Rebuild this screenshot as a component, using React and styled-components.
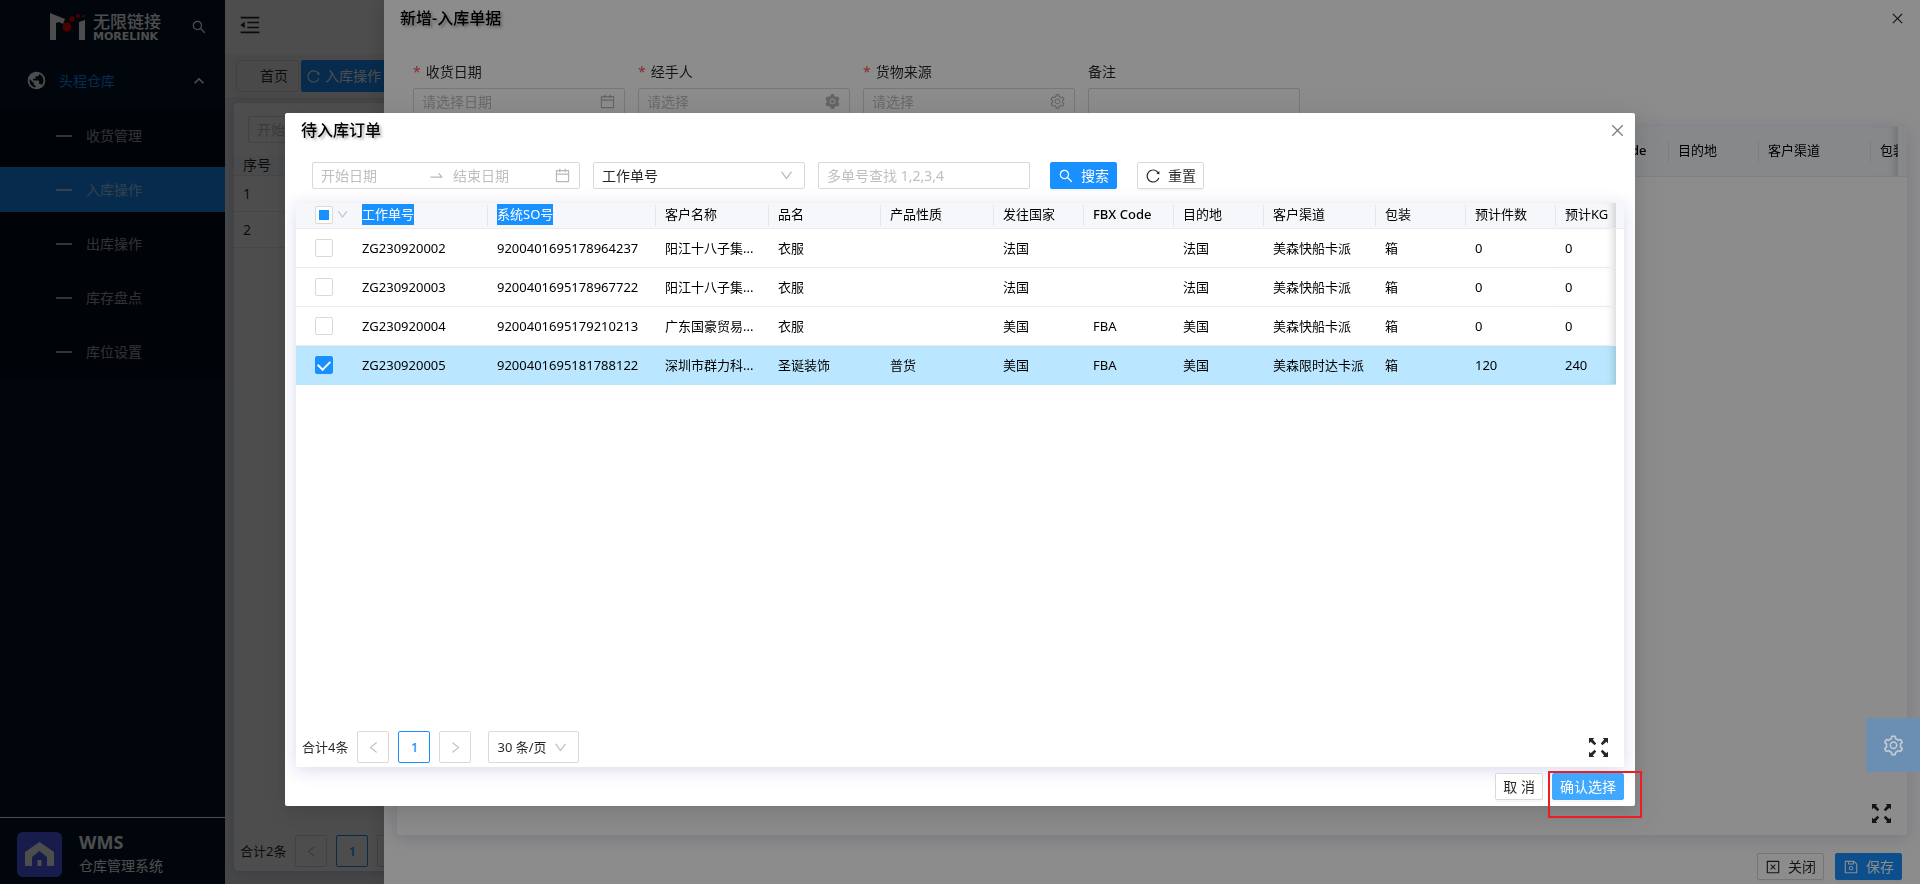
import React, { useState } from 'react'
import styled, { createGlobalStyle, css } from 'styled-components';
import {
    AiFillSetting,
    AiOutlineCalendar,
    AiOutlineClose,
    AiOutlineCloseSquare,
    AiOutlineDown,
    AiOutlineLeft,
    AiOutlineMenuFold,
    AiOutlineReload,
    AiOutlineRight,
    AiOutlineSave,
    AiOutlineSearch,
    AiOutlineSetting,
    AiOutlineSwapRight,
} from 'react-icons/ai';
import { MdKeyboardArrowUp, MdPublic } from 'react-icons/md';

const menuItems = ['收货管理', '入库操作', '出库操作', '库存盘点', '库位设置'];

const columns = [
    { key: 'jobNo', title: '工作单号', width: 135, marked: true },
    { key: 'soNo', title: '系统SO号', width: 168, marked: true },
    { key: 'customer', title: '客户名称', width: 113 },
    { key: 'goods', title: '品名', width: 112 },
    { key: 'nature', title: '产品性质', width: 113 },
    { key: 'country', title: '发往国家', width: 90 },
    { key: 'fbx', title: 'FBX Code', width: 90 },
    { key: 'dest', title: '目的地', width: 90 },
    { key: 'channel', title: '客户渠道', width: 112 },
    { key: 'pack', title: '包装', width: 90 },
    { key: 'count', title: '预计件数', width: 90 },
    { key: 'weight', title: '预计KG' },
];

const orders = [
    { jobNo: 'ZG230920002', soNo: '9200401695178964237', customer: '阳江十八子集...', goods: '衣服', nature: '', country: '法国', fbx: '', dest: '法国', channel: '美森快船卡派', pack: '箱', count: 0, weight: 0 },
    { jobNo: 'ZG230920003', soNo: '9200401695178967722', customer: '阳江十八子集...', goods: '衣服', nature: '', country: '法国', fbx: '', dest: '法国', channel: '美森快船卡派', pack: '箱', count: 0, weight: 0 },
    { jobNo: 'ZG230920004', soNo: '9200401695179210213', customer: '广东国豪贸易...', goods: '衣服', nature: '', country: '美国', fbx: 'FBA', dest: '美国', channel: '美森快船卡派', pack: '箱', count: 0, weight: 0 },
    { jobNo: 'ZG230920005', soNo: '9200401695181788122', customer: '深圳市群力科...', goods: '圣诞装饰', nature: '普货', country: '美国', fbx: 'FBA', dest: '美国', channel: '美森限时达卡派', pack: '箱', count: 120, weight: 240 },
];

function LogoMark() {
    return (
        <svg width="36" height="28" viewBox="0 0 36 28" aria-hidden="true">
            <path d="M0 0 L15 6 L13 11 C10 9 8 9 6 10 V27 H0 Z" fill="#fff" />
            <path d="M29 9 L35 7 V27 H29 Z" fill="#fff" />
            <circle cx="17" cy="14" r="4.5" fill="#f00" />
            <circle cx="22" cy="6" r="2.8" fill="#f00" />
            <circle cx="28" cy="3" r="2" fill="#f00" />
            <circle cx="33.5" cy="3" r="1.3" fill="#f00" />
        </svg>
    );
}

function HouseIcon() {
    return (
        <svg width="29" height="24" viewBox="0 0 29 24" aria-hidden="true">
            <path d="M14.5 0 L29 10 V24 H22 V15 L14.5 9 L7 15 V24 H0 V10 Z" fill="#fff" />
            <rect x="12.5" y="18" width="4" height="6" fill="#fff" />
        </svg>
    );
}

function ExpandIcon() {
    return (
        <svg width="19" height="19" viewBox="0 0 19 19" aria-hidden="true">
            <path d="M0 0 H5.4 L3.8 1.6 L7.2 5.6 L5.6 7.2 L1.6 3.8 L0 5.4 Z" />
            <path d="M19 0 H13.6 L15.2 1.6 L11.8 5.6 L13.4 7.2 L17.4 3.8 L19 5.4 Z" />
            <path d="M0 19 H5.4 L3.8 17.4 L7.2 13.4 L5.6 11.8 L1.6 15.2 L0 13.6 Z" />
            <path d="M19 19 H13.6 L15.2 17.4 L11.8 13.4 L13.4 11.8 L17.4 15.2 L19 13.6 Z" />
        </svg>
    );
}

function DateRange({ name }) {
    return (
        <Field $wide>
            <input aria-label={`${name}开始日期`} placeholder="开始日期" />
            <AiOutlineSwapRight className="arrow" />
            <input aria-label={`${name}结束日期`} placeholder="结束日期" />
            <AiOutlineCalendar />
        </Field>
    );
}

function Pager({ total, size }) {
    return (
        <PagerRow>
            <span className="total">合计{total}条</span>
            <PageButton aria-label="上一页"><AiOutlineLeft /></PageButton>
            <PageButton $active>1</PageButton>
            <PageButton aria-label="下一页"><AiOutlineRight /></PageButton>
            {size && (
                <PageSize>
                    <select aria-label="每页条数" defaultValue={size}>
                        <option value={size}>{size} 条/页</option>
                    </select>
                    <AiOutlineDown />
                </PageSize>
            )}
        </PagerRow>
    );
}

function Sidebar() {
    const [current, setCurrent] = useState(1);

    return (
        <Side>
            <Brand>
                <LogoMark />
                <div className="names">
                    <span className="cn">无限链接</span>
                    <span className="en">MORELINK</span>
                </div>
                <button aria-label="搜索菜单"><AiOutlineSearch size={16} /></button>
            </Brand>
            <MenuTitle>
                <MdPublic size={21} />
                <span>头程仓库</span>
                <MdKeyboardArrowUp size={20} className="fold" />
            </MenuTitle>
            <SubMenu>
                {
                    menuItems.map((item, index) => (
                        <MenuItem
                            key={item}
                            href={`#${index}`}
                            $selected={index === current}
                            onClick={() => setCurrent(index)}>
                            {item}
                        </MenuItem>
                    ))
                }
            </SubMenu>
            <SystemInfo>
                <div className="house"><HouseIcon /></div>
                <div>
                    <h2>WMS</h2>
                    <p>仓库管理系统</p>
                </div>
            </SystemInfo>
        </Side>
    );
}

function InboundPage() {
    return (
        <Main>
            <TopBar>
                <button aria-label="收起菜单"><AiOutlineMenuFold size={24} /></button>
            </TopBar>
            <TabBar>
                <Tab href="#home">首页</Tab>
                <Tab href="#inbound" $active><AiOutlineReload size={15} />入库操作</Tab>
            </TabBar>
            <PageCard>
                <div className="filter"><DateRange name="入库" /></div>
                <PlainTable>
                    <thead>
                        <tr><th>序号</th></tr>
                    </thead>
                    <tbody>
                        <tr><td>1</td></tr>
                        <tr><td>2</td></tr>
                    </tbody>
                </PlainTable>
                <CardFooter>
                    <Pager total={2} />
                </CardFooter>
            </PageCard>
        </Main>
    );
}

function NewReceiptDrawer() {
    return (
        <Mask $align="right">
            <Drawer>
                <PanelHeader $height={36}>
                    <h1>新增-入库单据</h1>
                    <button aria-label="关闭抽屉"><AiOutlineClose size={15} /></button>
                </PanelHeader>
                <ReceiptForm>
                    <FormItem>
                        <Label htmlFor="date" $required>收货日期</Label>
                        <Field>
                            <input id="date" placeholder="请选择日期" />
                            <AiOutlineCalendar />
                        </Field>
                    </FormItem>
                    <FormItem>
                        <Label htmlFor="handler" $required>经手人</Label>
                        <Field>
                            <input id="handler" placeholder="请选择" />
                            <AiFillSetting />
                        </Field>
                    </FormItem>
                    <FormItem>
                        <Label htmlFor="source" $required>货物来源</Label>
                        <Field>
                            <input id="source" placeholder="请选择" />
                            <AiOutlineSetting />
                        </Field>
                    </FormItem>
                    <FormItem>
                        <Label htmlFor="remark">备注</Label>
                        <Field>
                            <input id="remark" />
                        </Field>
                    </FormItem>
                </ReceiptForm>
                <Card $side={13}>
                    <OrderTable $headHeight={50}>
                        <colgroup>
                            <col />
                            <col width="90" />
                            <col width="90" />
                            <col width="112" />
                            <col width="27" />
                            <col width="9" />
                        </colgroup>
                        <thead>
                            <tr>
                                <th></th>
                                <th className="latin">FBX Code</th>
                                <th>目的地</th>
                                <th>客户渠道</th>
                                <th className="edge">包装</th>
                                <th></th>
                            </tr>
                        </thead>
                    </OrderTable>
                    <CardFooter $tall>
                        <ExpandButton aria-label="全屏"><ExpandIcon /></ExpandButton>
                    </CardFooter>
                </Card>
                <DrawerFooter>
                    <Button><AiOutlineCloseSquare />关闭</Button>
                    <Button $primary><AiOutlineSave />保存</Button>
                </DrawerFooter>
            </Drawer>
        </Mask>
    );
}

function PendingOrdersModal() {
    const [checked, setChecked] = useState(['ZG230920005']);

    const toggle = (jobNo) => {
        setChecked(checked.includes(jobNo)
            ? checked.filter((no) => no !== jobNo)
            : [...checked, jobNo]);
    }

    const partly = checked.length > 0 && checked.length < orders.length;

    return (
        <Mask $align="middle">
            <Modal role="dialog" aria-label="待入库订单">
                <PanelHeader $height={34}>
                    <h1>待入库订单</h1>
                    <button aria-label="关闭弹窗"><AiOutlineClose size={17} /></button>
                </PanelHeader>
                <FilterRow>
                    <DateRange name="订单" />
                    <Field>
                        <select aria-label="单号类型" defaultValue="job">
                            <option value="job">工作单号</option>
                        </select>
                        <AiOutlineDown className="down" />
                    </Field>
                    <Field>
                        <input aria-label="多单号查找" placeholder="多单号查找 1,2,3,4" />
                    </Field>
                    <div className="actions">
                        <Button $primary><AiOutlineSearch />搜索</Button>
                        <Button><AiOutlineReload />重置</Button>
                    </div>
                </FilterRow>
                <Card $side={11}>
                    <OrderTable $headHeight={26}>
                        <colgroup>
                            <col width="57" />
                            {columns.map((col) => <col key={col.key} width={col.width} />)}
                            <col width="8" />
                        </colgroup>
                        <thead>
                            <tr>
                                <th className="pick">
                                    <div>
                                        <CheckBox aria-label="全选" $partly={partly} checked={checked.length === orders.length} onChange={() => setChecked(partly ? orders.map((o) => o.jobNo) : [])} />
                                        <AiOutlineDown />
                                    </div>
                                </th>
                                {
                                    columns.map((col, index) => (
                                        <th
                                            key={col.key}
                                            className={`${index === columns.length - 1 ? 'edge' : ''} ${col.key === 'fbx' ? 'latin' : ''}`}>
                                            {col.marked ? <mark>{col.title}</mark> : col.title}
                                        </th>
                                    ))
                                }
                                <th></th>
                            </tr>
                        </thead>
                        <tbody>
                            {
                                orders.map((order) => (
                                    <tr key={order.jobNo} className={checked.includes(order.jobNo) ? 'selected' : ''}>
                                        <td className="pick">
                                            <div>
                                                <CheckBox aria-label={order.jobNo} checked={checked.includes(order.jobNo)} onChange={() => toggle(order.jobNo)} />
                                            </div>
                                        </td>
                                        {
                                            columns.map((col, index) => (
                                                <td key={col.key} className={index === columns.length - 1 ? 'edge' : ''}>{order[col.key]}</td>
                                            ))
                                        }
                                    </tr>
                                ))
                            }
                        </tbody>
                    </OrderTable>
                    <CardFooter>
                        <Pager total={4} size={30} />
                        <ExpandButton aria-label="全屏"><ExpandIcon /></ExpandButton>
                    </CardFooter>
                </Card>
                <ModalFooter>
                    <Button>取 消</Button>
                    <Button $primary $hover>确认选择</Button>
                    <Highlight />
                </ModalFooter>
            </Modal>
        </Mask>
    );
}

function App() {
    return (
        <>
            <GlobalStyle />
            <Layout>
                <Sidebar />
                <InboundPage />
            </Layout>
            <NewReceiptDrawer />
            <PendingOrdersModal />
            <SettingHandle aria-label="主题设置"><AiOutlineSetting size={23} /></SettingHandle>
        </>
    );
}

const GlobalStyle = createGlobalStyle`
  * {
    box-sizing: border-box;
  }
  body {
    margin: 0;
    color: rgba(0, 0, 0, 0.85);
    font-family: "Noto Sans", "Noto Sans CJK SC", sans-serif;
    font-size: 14px;
    line-height: 22px;
  }
  h1, h2, p {
    margin: 0;
  }
  a {
    color: inherit;
    text-decoration: none;
  }
  button, input, select {
    margin: 0;
    padding: 0;
    border: 0;
    background: none;
    color: inherit;
    font: inherit;
  }
  button {
    cursor: pointer;
  }
  svg {
    display: block;
    flex: none;
    fill: currentColor;
  }
`;

const Layout = styled.div`
  display: flex;
  min-height: 100vh;
`;

const Side = styled.aside`
  display: flex;
  flex-direction: column;
  width: 225px;
  background: #001529;
  color: rgba(255, 255, 255, 0.65);
`;

const Brand = styled.div`
  display: flex;
  align-items: center;
  gap: 7px;
  height: 54px;
  padding: 0 18px 0 50px;
  color: #fff;
  .names {
    display: flex;
    flex-direction: column;
    flex: 1;
  }
  .cn {
    font-size: 17px;
    font-weight: 500;
    line-height: 18px;
  }
  .en {
    font-family: "DejaVu Sans", sans-serif;
    font-size: 11px;
    font-weight: 700;
    line-height: 11px;
  }
`;

const MenuTitle = styled.div`
  display: flex;
  align-items: center;
  gap: 12px;
  height: 53px;
  padding: 0 16px 0 26px;
  color: #fff;
  span {
    color: #1890ff;
  }
  .fold {
    margin-left: auto;
  }
`;

const SubMenu = styled.nav`
  display: flex;
  flex-direction: column;
  gap: 9px;
  padding: 6px 0 4px;
  background: #000c17;
`;

const MenuItem = styled.a`
  display: flex;
  align-items: center;
  gap: 14px;
  height: 45px;
  padding-left: 56px;
  background: ${({ $selected }) => ($selected ? '#1890ff' : 'transparent')};
  &::before {
    content: "";
    width: 16px;
    height: 2px;
    background: currentColor;
  }
`;

const SystemInfo = styled.div`
  display: flex;
  align-items: center;
  gap: 17px;
  margin-top: auto;
  padding: 13px 17px 7px;
  border-top: 1px solid #fff;
  color: #fff;
  .house {
    display: flex;
    align-items: center;
    justify-content: center;
    width: 45px;
    height: 45px;
    border-radius: 6px;
    background: #4d5fff;
  }
  h2 {
    font-size: 18px;
    line-height: 23px;
  }
  p {
    line-height: 23px;
  }
`;

const Main = styled.main`
  display: flex;
  flex-direction: column;
  flex: 1;
  background: #e8eaef;
`;

const TopBar = styled.header`
  display: flex;
  align-items: center;
  height: 54px;
  padding: 0 0 4px 13px;
  background: #fff;
  box-shadow: 0 1px 4px rgba(0, 21, 41, 0.12);
`;

const TabBar = styled.div`
  display: flex;
  gap: 2px;
  height: 45px;
  padding: 6px 11px;
  border-bottom: 1px solid #d8dae0;
  background: #f0f1f4;
`;

const Tab = styled.a`
  display: flex;
  align-items: center;
  gap: 4px;
  height: 32px;
  padding: 0 10px 0 23px;
  border: 1px solid #d9d9d9;
  border-radius: 2px;
  ${({ $active }) => $active && css`
    padding: 0 24px 0 4px;
    border-color: #1890ff;
    background: #1890ff;
    color: #fff;
  `}
`;

const PageCard = styled.section`
  display: flex;
  flex-direction: column;
  flex: 1;
  margin: 4px 9px 13px;
  border-radius: 4px;
  background: #fff;
  box-shadow: 0 2px 12px rgba(80, 80, 160, 0.2);
  .filter {
    padding: 13px 14px 12px;
  }
`;

const PlainTable = styled.table`
  width: 100%;
  border-spacing: 0;
  th, td {
    height: 36px;
    padding: 0 9px;
    border-bottom: 1px solid #e8e8e8;
    font-weight: 400;
    text-align: left;
  }
  th {
    height: 21px;
    line-height: 20px;
    background: #f5f7fa;
  }
`;

const Mask = styled.div`
  position: fixed;
  inset: 0;
  display: flex;
  background: rgba(0, 0, 0, 0.45);
  justify-content: ${({ $align }) => ($align === 'right' ? 'flex-end' : 'center')};
  padding: ${({ $align }) => ($align === 'right' ? '0' : '113px 285px 78px')};
`;

const Drawer = styled.section`
  display: flex;
  flex-direction: column;
  width: 80%;
  background: #fff;
  box-shadow: -6px 0 16px rgba(0, 0, 0, 0.08), -9px 0 28px rgba(0, 0, 0, 0.05);
`;

const Modal = styled.section`
  display: flex;
  flex-direction: column;
  flex: 1;
  min-width: 0;
  border-radius: 2px;
  background: #fff;
  box-shadow: 0 6px 16px rgba(0, 0, 0, 0.08), 0 9px 28px 8px rgba(0, 0, 0, 0.05);
`;

const PanelHeader = styled.header`
  display: flex;
  align-items: center;
  justify-content: space-between;
  height: ${({ $height }) => $height}px;
  padding: 0 9px 0 16px;
  h1 {
    color: #000;
    font-size: 16px;
    font-weight: 500;
    text-shadow: 2px 2px 3px rgba(0, 0, 0, 0.35);
  }
  button {
    padding: 0 0 0 8px;
    color: rgba(0, 0, 0, 0.5);
  }
  ${Drawer} & button {
    padding-right: 6px;
    color: rgba(0, 0, 0, 0.85);
  }
`;

const ReceiptForm = styled.form`
  display: flex;
  gap: 13px;
  padding: 25px 29px 12px;
`;

const FormItem = styled.div`
  display: flex;
  flex-direction: column;
  gap: 5px;
`;

const Label = styled.label`
  display: flex;
  gap: 5px;
  ${({ $required }) => $required && css`
    &::before {
      content: "*";
      color: #ff4d4f;
    }
  `}
`;

const Field = styled.div`
  display: flex;
  align-items: center;
  width: ${({ $wide }) => ($wide ? 268 : 212)}px;
  height: 27px;
  padding: 0 8px;
  border: 1px solid #d9d9d9;
  border-radius: 2px;
  background: #fff;
  input, select {
    flex: 1;
    min-width: 0;
    height: 100%;
    outline: 0;
    appearance: none;
  }
  input::placeholder {
    color: #bfbfbf;
    opacity: 1;
  }
  svg {
    color: #b8b8b8;
    font-size: 17px;
  }
  .arrow {
    margin: 0 8px 0 6px;
  }
  .down {
    margin-right: 2px;
    font-size: 15px;
  }
`;

const FilterRow = styled.div`
  display: flex;
  gap: 13px;
  padding: 15px 27px 14px;
  .actions {
    display: flex;
    gap: 20px;
    padding-left: 7px;
  }
`;

const Button = styled.button`
  display: flex;
  align-items: center;
  justify-content: center;
  gap: 7px;
  height: 27px;
  padding: 0 7px;
  border: 1px solid #d9d9d9;
  border-radius: 2px;
  background: #fff;
  box-shadow: 0 2px 0 rgba(0, 0, 0, 0.03);
  white-space: nowrap;
  svg {
    font-size: 16px;
  }
  ${({ $primary, $hover }) => $primary && css`
    border-color: ${$hover ? '#40a9ff' : '#1890ff'};
    background: ${$hover ? '#40a9ff' : '#1890ff'};
    color: #fff;
  `}
`;

const Card = styled.div`
  display: flex;
  flex-direction: column;
  flex: 1;
  margin: 0 ${({ $side }) => $side}px;
  background: #fff;
  box-shadow: 0 3px 16px rgba(80, 80, 180, 0.22);
`;

const OrderTable = styled.table`
  width: 100%;
  table-layout: fixed;
  border-spacing: 0;
  font-size: 13px;
  color: #000;
  th, td {
    padding: 0 0 0 9px;
    border-bottom: 1px solid #ebebeb;
    overflow: hidden;
    text-align: left;
    white-space: nowrap;
  }
  th {
    height: ${({ $headHeight }) => $headHeight}px;
    padding-bottom: 2px;
    background: #f5f7fb linear-gradient(#e4e6ea, #e4e6ea) right center / 1px 21px no-repeat;
    font-weight: 400;
    line-height: 21px;
  }
  th:first-child, th:last-child, th.edge {
    background-image: none;
  }
  th.latin {
    font-weight: 500;
  }
  td {
    height: 39px;
  }
  .pick {
    padding-left: 19px;
  }
  .pick div {
    display: flex;
    align-items: center;
    gap: 3px;
    color: #bfbfbf;
    font-size: 13px;
  }
  .edge {
    box-shadow: inset -8px 0 8px -6px rgba(0, 0, 0, 0.18);
  }
  .selected td {
    border-color: #bae7ff;
    background: #bae7ff;
  }
  mark {
    display: inline-block;
    background: #1890ff;
    color: #fff;
  }
`;

const CheckBox = styled.input.attrs({ type: 'checkbox' })`
  display: flex;
  align-items: center;
  justify-content: center;
  flex: none;
  width: 18px;
  height: 18px;
  border: 1px solid #d9d9d9;
  border-radius: 2px;
  background: #fff;
  appearance: none;
  &:checked {
    border-color: #1890ff;
    background: #1890ff;
  }
  &:checked::after {
    content: "";
    width: 6px;
    height: 10px;
    margin-bottom: 3px;
    border: solid #fff;
    border-width: 0 2px 2px 0;
    transform: rotate(45deg);
  }
  ${({ $partly }) => $partly && css`
    &::after {
      content: "";
      width: 10px;
      height: 10px;
      background: #1890ff;
    }
  `}
`;

const CardFooter = styled.div`
  display: flex;
  align-items: center;
  justify-content: space-between;
  margin-top: auto;
  padding: 4px 16px ${({ $tall }) => ($tall ? 12 : 4)}px 6px;
`;

const ExpandButton = styled.button`
  margin-left: auto;
  color: rgba(0, 0, 0, 0.85);
`;

const PagerRow = styled.div`
  display: flex;
  align-items: center;
  gap: 9px;
  font-size: 13px;
`;

const PageButton = styled.button`
  display: flex;
  align-items: center;
  justify-content: center;
  width: 32px;
  height: 32px;
  border: 1px solid ${({ $active }) => ($active ? '#1890ff' : '#d9d9d9')};
  border-radius: 2px;
  background: #fff;
  color: ${({ $active }) => ($active ? '#1890ff' : '#bfbfbf')};
  font-weight: 500;
  svg {
    font-size: 15px;
  }
`;

const PageSize = styled.div`
  display: flex;
  align-items: center;
  gap: 6px;
  height: 32px;
  margin-left: 8px;
  padding: 0 10px 0 8px;
  border: 1px solid #d9d9d9;
  border-radius: 2px;
  select {
    appearance: none;
    outline: 0;
  }
  svg {
    color: #bfbfbf;
    font-size: 15px;
  }
`;

const DrawerFooter = styled.footer`
  display: flex;
  justify-content: flex-end;
  gap: 11px;
  padding: 18px 18px 4px;
`;

const ModalFooter = styled.footer`
  position: relative;
  display: flex;
  justify-content: flex-end;
  gap: 9px;
  padding: 6px 11px;
`;

/* red frame drawn over the confirm button */
const Highlight = styled.div`
  position: absolute;
  top: 4px;
  right: -7px;
  width: 94px;
  height: 47px;
  border: 2px solid #ee1c25;
  pointer-events: none;
`;

const SettingHandle = styled.button`
  position: fixed;
  right: 0;
  bottom: 112px;
  display: flex;
  align-items: center;
  justify-content: center;
  width: 54px;
  height: 54px;
  border-radius: 4px 0 0 4px;
  background: #6b8eb3;
  color: #c4ccd6;
`;

export default App
